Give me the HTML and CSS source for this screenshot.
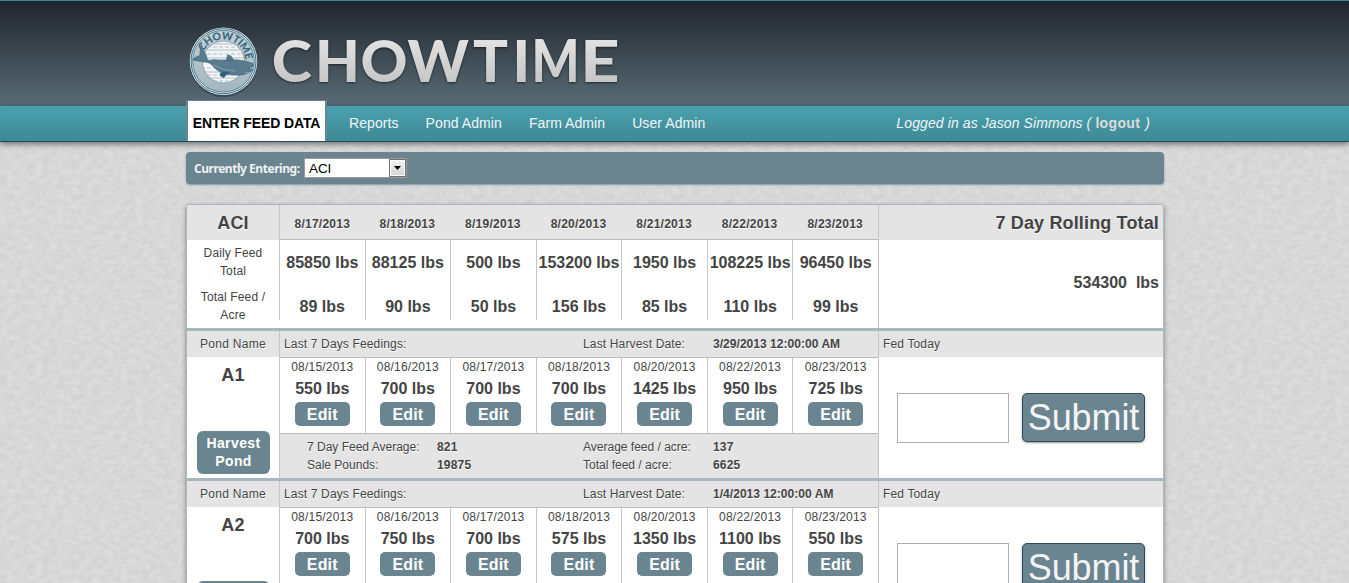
FILE: index.html
```html
<!DOCTYPE html>
<html lang="en">
<head>
<meta charset="utf-8">
<title>Chowtime</title>
<link rel="stylesheet" href="styles.css">
</head>
<body>
<header class="header">
  <div class="wrap brand">
    <svg class="badge" width="72" height="74" viewBox="0 0 72 74">
      <defs>
        <linearGradient id="disc" x1="0" y1="0" x2="0" y2="1"><stop offset="0" stop-color="#c3d0d6"/><stop offset="1" stop-color="#a3b6bf"/></linearGradient>
        <clipPath id="sea"><circle cx="36.500" cy="36" r="21"/></clipPath>
        <path id="arc" d="M16.500 25.500 A22.300 22.300 0 0 1 58.500 37.500"/>
      </defs>
      <circle cx="36.500" cy="37" r="34" fill="#203440" opacity=".55"/>
      <circle cx="36.500" cy="35.200" r="33.800" fill="#d9e4e8"/>
      <circle cx="36.500" cy="35.200" r="32.500" fill="none" stroke="#3f7189" stroke-width="1"/>
      <circle cx="36.500" cy="35.200" r="30.800" fill="url(#disc)" stroke="#3f7189" stroke-width=".8"/>
      <circle cx="36.500" cy="36" r="21" fill="#f2f4f5" stroke="#7793a1" stroke-width=".8"/>
      <g clip-path="url(#sea)" fill="none" stroke="#a3b4bd" stroke-width=".8">
        <path d="M14 18h46M14 24h46M14 32h46M14 46h46M14 52h46"/>
        <path stroke-dasharray="4 2" d="M14 21h46M14 28h46M14 36h46M14 42h46M14 49h46M14 55h46"/>
      </g>
      <text class="badge-text"><textPath href="#arc" textLength="57">CHOWTIME</textPath></text>
      <g fill="#587c8d" stroke="#365f76" stroke-width=".6" stroke-linejoin="round">
        <path d="M14.500 18.500 C15 23 18 26 19.500 30 C20 32 20 34 22 34.500 C25 33.500 28 33.500 32 34 L42 34 C51 33 58 35 66 37.500 L66 40.500 L61 42.500 L66 43.500 C60 49 54 49.500 47 49 C38 49 30 46 24 38 C20 35 12 36 6 34 C6 32 10 30.500 13 29.500 C13 26 13 22 14.500 18.500Z"/>
        <path d="M39.500 34 L40.500 29 Q45 29 46 34Z"/>
        <path fill="#2e617e" d="M35 46 L43 46 Q39 48 37 51.500 Q33 51 33 48Z"/>
      </g>
      <path fill="none" stroke="#a6b9c2" stroke-width=".6" d="M26 39 Q36 45 48 45M58 46 L65 48"/>
    </svg>
    <svg class="wordmark" width="370" height="74" viewBox="0 0 370 74">
      <defs><linearGradient id="silver" gradientUnits="userSpaceOnUse" x1="0" y1="-43" x2="0" y2="1"><stop offset="0" stop-color="#e2e2e2"/><stop offset="1" stop-color="#c6c6c6"/></linearGradient></defs>
      <g class="wordmark-text" fill="url(#silver)">
        <text transform="translate(-.3 52.500) scale(1.05 1)">C</text>
        <text transform="translate(0 52.500)" x="43 88.500 135.500 201 240.500">HOWTI</text>
        <text transform="translate(259.500 52.500) scale(.87 1)">M</text>
        <text transform="translate(308.200 52.500) scale(1.18 1)">E</text>
      </g>
    </svg>
  </div>
</header>
<nav class="nav">
  <div class="wrap nav-row">
    <a class="tab">ENTER FEED DATA</a>
    <a class="link">Reports</a>
    <a class="link">Pond Admin</a>
    <a class="link">Farm Admin</a>
    <a class="link">User Admin</a>
    <span class="login">Logged in as Jason Simmons ( <b>logout</b> )</span>
  </div>
</nav>
<main class="wrap">
  <div class="farm-bar">
    <label>Currently Entering:</label>
    <div class="select"><span>ACI</span><i class="arrow"><svg width="7" height="4" viewBox="0 0 7 4"><path d="M0 0h7L3.500 4z"/></svg></i></div>
  </div>
  <div class="panel">
    <section class="summary">
      <div class="side">
        <h2>ACI</h2>
        <p>Daily Feed<br>Total</p>
        <p>Total Feed /<br>Acre</p>
      </div>
      <div class="days">
        <div class="day"><h3>8/17/2013</h3><b>85850 lbs</b><b>89 lbs</b></div>
        <div class="day"><h3>8/18/2013</h3><b>88125 lbs</b><b>90 lbs</b></div>
        <div class="day"><h3>8/19/2013</h3><b>500 lbs</b><b>50 lbs</b></div>
        <div class="day"><h3>8/20/2013</h3><b>153200 lbs</b><b>156 lbs</b></div>
        <div class="day"><h3>8/21/2013</h3><b>1950 lbs</b><b>85 lbs</b></div>
        <div class="day"><h3>8/22/2013</h3><b>108225 lbs</b><b>110 lbs</b></div>
        <div class="day"><h3>8/23/2013</h3><b>96450 lbs</b><b>99 lbs</b></div>
      </div>
      <div class="total"><h2>7 Day Rolling Total</h2><b>534300&nbsp; lbs</b></div>
    </section>
    <section class="pond">
      <div class="pond-side">
        <div class="bar">Pond Name</div>
        <h2>A1</h2>
        <a class="harvest">Harvest<br>Pond</a>
      </div>
      <div class="pond-main">
        <div class="bar info"><span>Last 7 Days Feedings:</span><span>Last Harvest Date:</span><b>3/29/2013 12:00:00 AM</b></div>
        <div class="feeds">
          <div class="feed"><span>08/15/2013</span><b>550 lbs</b><a class="edit">Edit</a></div>
          <div class="feed"><span>08/16/2013</span><b>700 lbs</b><a class="edit">Edit</a></div>
          <div class="feed"><span>08/17/2013</span><b>700 lbs</b><a class="edit">Edit</a></div>
          <div class="feed"><span>08/18/2013</span><b>700 lbs</b><a class="edit">Edit</a></div>
          <div class="feed"><span>08/20/2013</span><b>1425 lbs</b><a class="edit">Edit</a></div>
          <div class="feed"><span>08/22/2013</span><b>950 lbs</b><a class="edit">Edit</a></div>
          <div class="feed"><span>08/23/2013</span><b>725 lbs</b><a class="edit">Edit</a></div>
        </div>
        <div class="stats">
          <span>7 Day Feed Average:</span><b>821</b><span>Average feed / acre:</span><b>137</b>
          <span>Sale Pounds:</span><b>19875</b><span>Total feed / acre:</span><b>6625</b>
        </div>
      </div>
      <div class="pond-fed">
        <div class="bar">Fed Today</div>
        <div class="entry"><input class="amount" type="text"><a class="submit">Submit</a></div>
      </div>
    </section>
    <section class="pond">
      <div class="pond-side">
        <div class="bar">Pond Name</div>
        <h2>A2</h2>
        <a class="harvest"></a>
      </div>
      <div class="pond-main">
        <div class="bar info"><span>Last 7 Days Feedings:</span><span>Last Harvest Date:</span><b>1/4/2013 12:00:00 AM</b></div>
        <div class="feeds">
          <div class="feed"><span>08/15/2013</span><b>700 lbs</b><a class="edit">Edit</a></div>
          <div class="feed"><span>08/16/2013</span><b>750 lbs</b><a class="edit">Edit</a></div>
          <div class="feed"><span>08/17/2013</span><b>700 lbs</b><a class="edit">Edit</a></div>
          <div class="feed"><span>08/18/2013</span><b>575 lbs</b><a class="edit">Edit</a></div>
          <div class="feed"><span>08/20/2013</span><b>1350 lbs</b><a class="edit">Edit</a></div>
          <div class="feed"><span>08/22/2013</span><b>1100 lbs</b><a class="edit">Edit</a></div>
          <div class="feed"><span>08/23/2013</span><b>550 lbs</b><a class="edit">Edit</a></div>
        </div>
        <div class="stats"></div>
      </div>
      <div class="pond-fed">
        <div class="bar">Fed Today</div>
        <div class="entry"><input class="amount" type="text"><a class="submit">Submit</a></div>
      </div>
    </section>
  </div>
</main>
</body>
</html>
```
FILE: styles.css
```css
* { box-sizing: border-box; }
html { height: 100%; overflow: hidden; }
body {
  margin: 0;
  height: 583px;
  overflow: hidden;
  font: 12px/18px "Liberation Sans", Arial, sans-serif;
  letter-spacing: .15px;
  color: #444;
  background: #d7d7d7 url("data:image/svg+xml,%3Csvg xmlns='http://www.w3.org/2000/svg' width='200' height='200'%3E%3Cfilter id='n' x='0' y='0' width='100%25' height='100%25' color-interpolation-filters='sRGB'%3E%3CfeTurbulence type='fractalNoise' baseFrequency='.14 .2' numOctaves='4' stitchTiles='stitch'/%3E%3CfeColorMatrix values='.08 0 0 0 .806 .08 0 0 0 .806 .08 0 0 0 .806 0 0 0 0 1'/%3E%3C/filter%3E%3Crect width='200' height='200' filter='url(%23n)'/%3E%3C/svg%3E");
}
h2, h3, p { margin: 0; }
.wrap { width: 978px; margin-left: 186px; }

.header {
  height: 106px;
  border-top: 1px solid #3d8795;
  background: linear-gradient(#20252d, #596b75);
}
.brand { display: flex; height: 105px; }
.badge { margin: 25px 0 0 1px; flex: none; }
.badge-text { font: 900 10.5px Lato, sans-serif; fill: #376780; letter-spacing: 0; }
.wordmark { margin: 28px 0 0 13px; filter: drop-shadow(0 1px 1px rgba(0,0,0,.55)); overflow: visible; }
.wordmark-text { font: 900 58px Lato, sans-serif; letter-spacing: 0; }

.nav {
  height: 36px;
  border-bottom: 1px solid #234f58;
  background: linear-gradient(#4aa1af, #3f8994);
  box-shadow: 0 2px 6px rgba(0,0,0,.5);
}
.nav-row { display: flex; align-items: flex-start; height: 35px; }
.tab {
  width: 141px;
  height: 41px;
  margin: -6px 22px 0 0;
  border: 2px solid #6a8590;
  border-width: 1px 2px 0;
  background: #fff;
  color: #000;
  font: bold 14px/45px "Liberation Sans", Arial, sans-serif;
  letter-spacing: -.12px;
  text-align: center;
  white-space: nowrap;
}
.link { font-size: 14px; line-height: 34px; letter-spacing: .08px; color: #f2f6f7; margin-right: 27px; }
.login { margin: 0 14px 0 auto; font: italic 14px/34px "Liberation Sans", Arial, sans-serif; letter-spacing: .1px; color: #f0f5f6; }
.login b { font-style: normal; color: #dcdcdc; letter-spacing: .35px; margin-right: 1px; }

.farm-bar {
  display: flex;
  align-items: center;
  height: 32px;
  margin-top: 10px;
  padding-left: 8px;
  border-radius: 4px;
  background: #6a8590;
  box-shadow: 0 1px 2px rgba(106,133,144,.8);
}
.farm-bar label { width: 110px; font: bold 12px/18px "Noto Sans", sans-serif; letter-spacing: -.46px; color: #f0f0f0; white-space: nowrap; padding-top: 1px; }
.select {
  display: flex;
  width: 103px;
  height: 20px;
  border: 1px solid #9b9b9f;
  background: #fff;
  color: #000;
  font-size: 13.5px;
  line-height: 19px;
  letter-spacing: -.1px;
}
.select span { flex: 1; padding-left: 4px; }
.arrow { display: flex; align-items: center; justify-content: center; width: 17px; border: 1px solid #707070; background: linear-gradient(#f4f4f4, #d2d2d2); box-shadow: inset 0 0 0 1px #fff; }

.panel {
  margin-top: 20px;
  border: 1px solid #a6b7bd;
  border-radius: 4px;
  background: #fff;
  box-shadow: 0 2px 5px rgba(0,0,0,.4);
  overflow: hidden;
}
.summary { display: flex; height: 126px; border-bottom: 3px solid #a6b7bd; }
.summary h2, .summary h3 { background: #e4e4e4; height: 35px; font-weight: bold; text-shadow: 0 1px #fff; }
.summary h2, .pond h2 { font-size: 18px; line-height: 36px; }
.summary h3 { font-size: 12px; line-height: 38px; letter-spacing: .25px; border-bottom: 1px solid #bcbcbc; }
.side { width: 92px; text-align: center; }
.side p { padding-top: 4px; height: 44px; }
.days { display: grid; grid-template-columns: repeat(7, 1fr); grid-template-rows: 115px; width: 599px; height: 115px; }
.day { height: 115px; text-align: center; border-left: 1px solid #c6c6c6; white-space: nowrap; }
.day + .day h3 { margin-left: -1px; }
.day b, .feed b { display: block; font-size: 16px; letter-spacing: 0; }
.day b { height: 44px; line-height: 45px; margin: 0 -2px; }
.total { flex: 1; border-left: 1px solid #c6c6c6; text-align: right; }
.total h2 { padding-right: 4px; }
.total b { display: block; margin: 34px 4px 0 0; font-size: 16px; letter-spacing: 0; }

.pond { display: flex; height: 150px; border-bottom: 3px solid #a6b7bd; }
.bar { height: 26px; line-height: 26px; background: #e4e4e4; text-shadow: 0 1px #fff; white-space: nowrap; }
.pond-side { width: 92px; text-align: center; }
.pond-side .bar { letter-spacing: .3px; }
.pond h2 { height: 74px; }
.harvest {
  display: block;
  width: 73px;
  height: 43px;
  margin: 0 0 0 10px;
  padding-top: 3px;
  border-radius: 6px;
  background: #6a8590;
  color: #fff;
  font-size: 14px;
  font-weight: bold;
  letter-spacing: .4px;
}
.pond-main { width: 599px; }
.pond-main, .pond-fed { border-left: 1px solid #c6c6c6; }
.info, .stats { display: grid; }
.info { grid-template-columns: 299px 130px 1fr; padding-left: 4px; height: 27px; border-bottom: 1px solid #bcbcbc; }
.feeds { display: grid; grid-template-columns: repeat(7, 1fr); width: 599px; margin-left: -1px; height: 75px; }
.feed { border-left: 1px solid #c6c6c6; text-align: center; }
.feed span { display: block; letter-spacing: .2px; }
.feed b { height: 26px; line-height: 26px; }
.edit { display: block; width: 55px; height: 24px; margin: 0 auto; border-radius: 5px; background: #6a8590; color: #fff; font: bold 16px/25px "Liberation Sans", Arial, sans-serif; }
.stats {
  grid-template-columns: 130px 146px 130px 1fr;
  align-content: start;
  height: 45px;
  padding: 4px 0 0 27px;
  border-top: 1px solid #bcbcbc;
  background: #e4e4e4;
  text-shadow: 0 1px #fff;
}
.stats span { letter-spacing: 0; }
.info b { letter-spacing: .04px; }
.stats b { letter-spacing: .2px; }
.pond-fed { flex: 1; }
.pond-fed .bar { padding-left: 4px; }
.entry { display: flex; gap: 13px; padding: 36px 0 0 18px; }
.amount { width: 112px; height: 50px; border: 1px solid #abadb3; background: #fff; padding: 0; }
.submit {
  width: 123px;
  height: 49px;
  border: 1px solid #344a54;
  border-radius: 5px;
  background: #6a8590;
  box-shadow: 0 1px 2px rgba(0,0,0,.4);
  color: #f4f4f4;
  font-size: 36px;
  letter-spacing: -.1px;
  line-height: 48px;
  text-align: center;
}
```
